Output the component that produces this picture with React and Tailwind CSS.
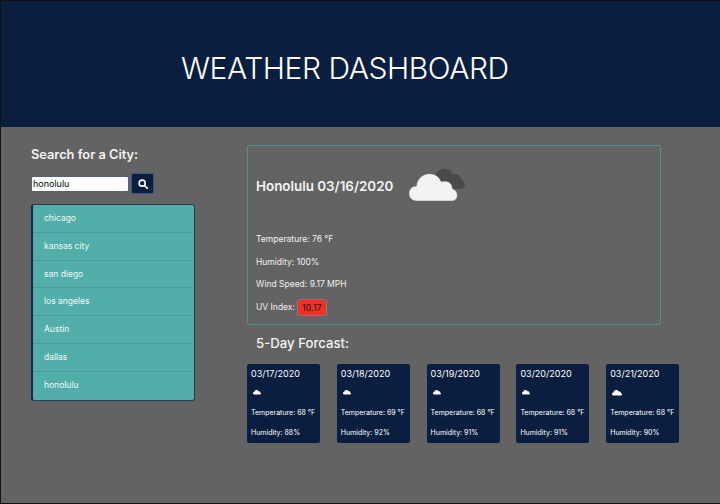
const cities = ["chicago", "kansas city", "san diego", "los angeles", "Austin", "dallas", "honolulu"];

const forecast = [
  { date: "03/17/2020", temp: 68, humidity: 88, big: false },
  { date: "03/18/2020", temp: 69, humidity: 92, big: false },
  { date: "03/19/2020", temp: 68, humidity: 91, big: false },
  { date: "03/20/2020", temp: 68, humidity: 91, big: false },
  { date: "03/21/2020", temp: 68, humidity: 90, big: true },
];

const cloudPath =
  "M12 50 C4 50 0 44 0 38 C0 31 5 26 12 26 C13 14 22 6 33 6 C42 6 49 11 52 19 C54 18 56 18 58 18 C65 18 70 23 70 30 C75 32 78 36 78 41 C78 46 74 50 69 50 Z";

function Clouds() {
  return (
    <svg width="60" height="38" viewBox="0 0 60 38" className="shrink-0">
      <g fill="#4a4a4a" transform="translate(21,-1) scale(0.46)">
        <path d={cloudPath} />
      </g>
      <g fill="#f2f2f2" stroke="#555555" strokeWidth="0.6" transform="translate(1,3) scale(0.62)">
        <path d={cloudPath} />
      </g>
    </svg>
  );
}

function SmallCloud({ big }) {
  return (
    <svg width={big ? 10 : 8} height={big ? 7 : 6} viewBox="0 0 78 52">
      <path d={cloudPath} fill="#ffffff" />
    </svg>
  );
}

function SearchIcon() {
  return (
    <svg width="10" height="10" viewBox="0 0 12 12" fill="none" stroke="#ffffff" strokeWidth="2">
      <circle cx="5" cy="5" r="3.6" />
      <path d="M7.8 7.8 L11 11" strokeLinecap="round" />
    </svg>
  );
}

function App() {
  return (
    <div className="w-[720px] h-[504px] overflow-hidden bg-[#636363] border-l border-b border-t border-[#111111] font-['Inter',sans-serif] text-white flex flex-col">
      <header className="h-[126px] shrink-0 bg-[#0a1f3f] pl-[180px] pt-[47px]">
        <h1 className="text-[30px] leading-[40px] font-light tracking-[-0.45px] text-white">WEATHER DASHBOARD</h1>
      </header>

      <div className="flex flex-1">
        <aside className="w-[216px] shrink-0 pl-[30px] pt-[19px]">
          <h2 className="text-[12.8px] leading-[18px] font-semibold text-[#f2f2f2]">Search for a City:</h2>
          <div className="mt-[9px] flex items-center gap-[2px]">
            <input
              readOnly
              value="honolulu"
              className="w-[98px] h-[16px] bg-white rounded-[2px] border border-[#55607a] pl-[1px] text-[9px] text-black outline-none"
            />
            <button className="w-[23px] h-[21px] flex items-center justify-center bg-[#0a1f3f] rounded-[2px] border border-[#3a5685]">
              <SearchIcon />
            </button>
          </div>
          <ul className="mt-[10px] w-[164px] bg-[#52aea8] rounded-[3px] border border-[#2a3a5a] border-l-2 border-l-[#14264a]">
            {cities.map((city, i) => (
              <li
                key={city}
                className={`h-[27.8px] pl-[11px] flex items-center text-[8.5px] text-[#f0f8f7] ${
                  i < cities.length - 1 ? "border-b border-[#4a9d97]" : ""
                }`}
              >
                {city}
              </li>
            ))}
          </ul>
        </aside>

        <main className="pl-[30px] pt-[18px]">
          <section className="w-[414px] h-[180px] border border-[#56908e] rounded-[2px] pl-[8px]">
            <div className="flex items-center gap-[15px] mt-[21px] h-[38px]">
              <h2 className="text-[13.4px] font-semibold text-[#f4f4f4]">Honolulu 03/16/2020</h2>
              <Clouds />
            </div>
            <div className="mt-[23px] flex flex-col text-[8.5px] text-[#f0f0f0]">
              <p className="h-[22.6px] flex items-center">Temperature: 76 °F</p>
              <p className="h-[22.6px] flex items-center">Humidity: 100%</p>
              <p className="h-[22.6px] flex items-center">Wind Speed: 9.17 MPH</p>
              <p className="h-[23px] flex items-center gap-[2px]">
                UV Index:
                <span className="h-[17px] px-[4px] flex items-center bg-[#ee3124] border border-[#7d7d7d] rounded-[3px] text-[9px] text-[#1c1c1c]">10.17</span>
              </p>
            </div>
          </section>

          <h3 className="mt-[9px] ml-[9px] text-[13.2px] leading-[18px] font-medium text-[#f2f2f2]">5-Day Forcast:</h3>

          <div className="mt-[12px] flex gap-[16.8px]">
            {forecast.map((day) => (
              <div key={day.date} className="w-[73px] h-[79px] bg-[#0a1f3f] rounded-[2px] pl-[4px] flex flex-col">
                <div className="mt-[4px] text-[9px] leading-[12px] text-white">{day.date}</div>
                <div className="mt-[7px] h-[10px] pl-[2px] flex items-center">
                  <SmallCloud big={day.big} />
                </div>
                <div className="mt-[11px] text-[7px] leading-[10px] text-white">Temperature: {day.temp} °F</div>
                <div className="mt-[10px] text-[7px] leading-[10px] text-white">Humidity: {day.humidity}%</div>
              </div>
            ))}
          </div>
        </main>
      </div>
    </div>
  );
}

export default App;
